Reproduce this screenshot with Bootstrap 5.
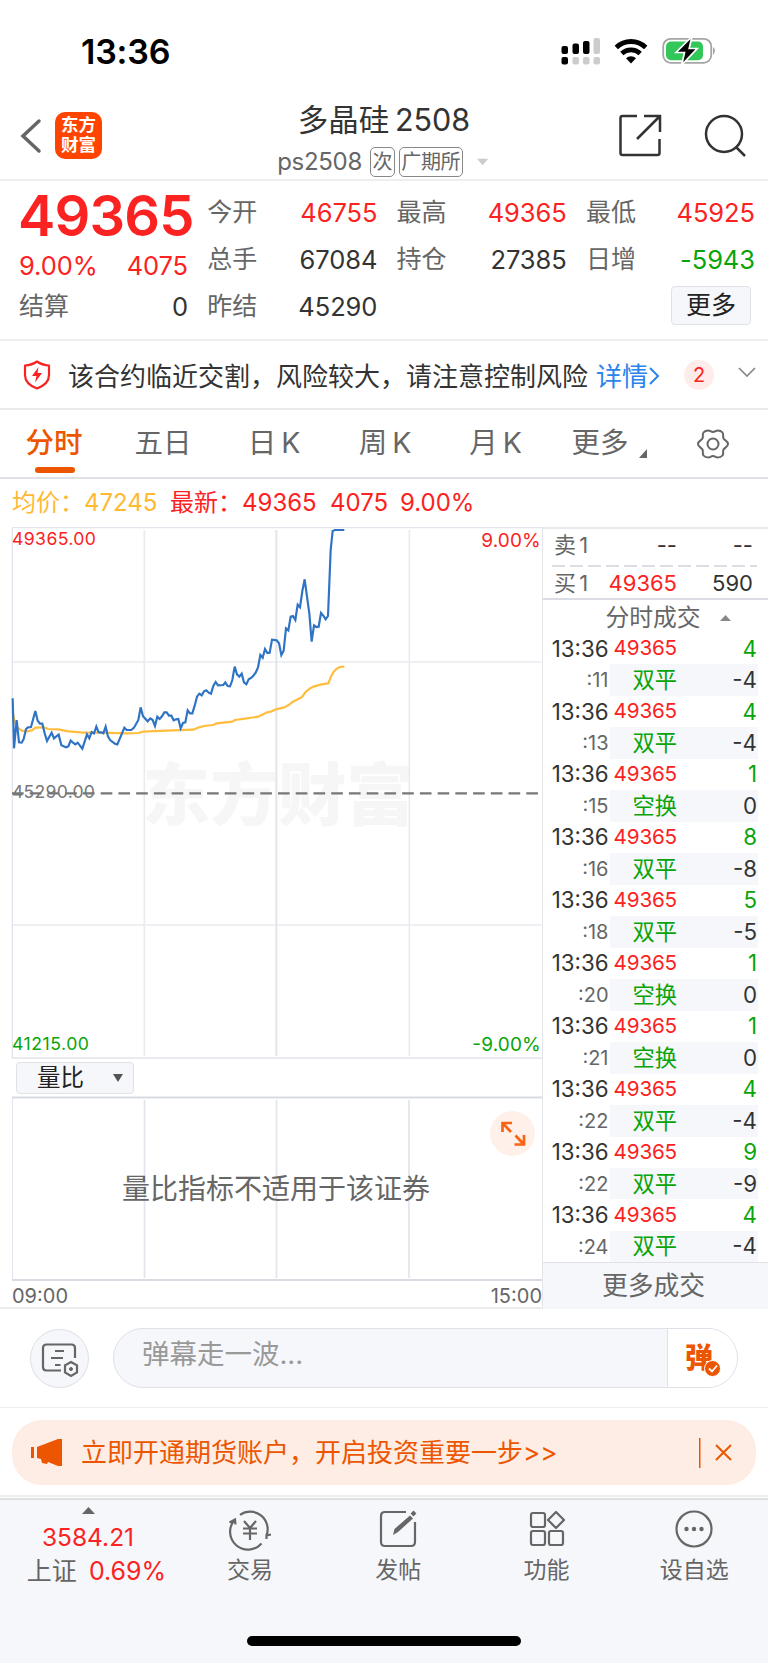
<!DOCTYPE html>
<html lang="zh-CN">
<head>
<meta charset="utf-8">
<meta name="viewport" content="width=device-width, initial-scale=1">
<title>多晶硅 2508</title>
<link href="https://cdn.jsdelivr.net/npm/bootstrap@5.3.0/dist/css/bootstrap.min.css" rel="stylesheet">
<style>
body{font-family:Inter,"Noto Sans CJK SC",sans-serif;color:#333;width:768px;line-height:1;background:#fff;overflow-x:hidden}
svg{display:block;flex:none;overflow:visible}
.t{white-space:nowrap;line-height:1}
.up{color:#fb2222}.down{color:#09a409}.mut{color:#666}.org{color:#ec5600}
.status{height:90px;padding:13px 52px 0 81px}
.clock{font-size:34px;font-weight:600;color:#000;letter-spacing:-.2px}
.head{height:91px;border-bottom:2px solid #eee;padding:2px 21px 0 21px}
.logo{width:47px;height:47px;border-radius:10px;background:#ff4400;color:#fff;font-weight:700;font-size:17.5px;line-height:20px;margin-left:14px;padding-top:3px}
.titlebox{gap:11px;padding-top:11px}
.title{font-size:30.5px;word-spacing:-3px}
.sub{font-size:24px;color:#666;letter-spacing:-.3px}
.tagbox{border:1.5px solid #888;border-radius:5px;height:30px;font-size:20px;padding:0 1.5px}
.quote{height:160px;padding:8px 13px 0 19px;border-bottom:2px solid #eee;display:grid;grid-template-columns:169px 170px 170px 169px;column-gap:19.3px;grid-template-rows:repeat(3,47px);font-size:25px}
.quote .n{font-size:25.5px;letter-spacing:-.1px}
.lastpx{grid-row:1/3}
.big{font-size:56px;font-weight:600;letter-spacing:-.8px;height:53px;margin-left:-1px}
.btn-more{width:80px;height:39px;background:#f6f7fa;border:1.5px solid #dfe1e6;border-radius:4px;font-size:25px;color:#222;margin:0 4px 3px 0}
.alertbar{height:69px;border-bottom:2px solid #e9e9ec;padding:0 12px 0 23px;font-size:26px}
.alertbar .dn{padding-top:4px}
.cnt{width:30px;height:30px;background:#feeceb;font-size:20px;margin-left:23px}
.tabs{height:69px;border-bottom:2px solid #dfe0e8;font-size:28.5px;color:#666;display:grid;grid-template-columns:108px 110px 112px 110px 111px 116px 91px}
.tabs>div{position:relative}
.ks{word-spacing:-3px}
.tabs .on::after{content:"";position:absolute;left:35px;top:57px;width:40px;height:6px;border-radius:3px;background:#ec5600}
.info{height:48px;font-size:24px;padding-left:12px}
.main{height:782px;border-bottom:2px solid #ebebee}
.left{width:530px;margin-left:12px}
.chart{height:532px}
.wm{font-size:68px;font-weight:900;fill:#f6f6f6}
.sel{width:118px;height:32px;background:#f6f7fa;border:1.5px solid #dfe1e6;border-radius:4px;font-size:23.5px;color:#222;margin:3px 0 0 4px;padding:0 10px 0 20px}
.vol{height:184px;margin-top:2px}
.note{left:0;top:0;width:100%;height:100%;font-size:28px;padding:1px 2px 0 0}
.exp{right:7px;top:15px}
.axis{height:28px;font-size:20px;padding-top:4px}
.right{width:226px;border-left:1px solid #e2e4e9}
.book{height:73px;border-bottom:2px solid #dcdde4;font-size:22px;border-top:2px solid #e8e9ec}
.book>div{height:34px;padding:0 15px 3px 11px}
.dash{height:2px!important;padding:0!important;margin:2px 11px 0 9px;background:repeating-linear-gradient(90deg,#dcdee3 0 13px,transparent 13px 18px)}
.b1{width:45px}.b2{width:78px;text-align:right}.b3{flex:1;text-align:right}
.dealhd{height:33px;font-size:23.8px;padding:2px 0 0 25px}
.deal{height:31.48px;padding-left:7px;font-size:22.3px}
.deal .tm{width:60px;text-align:right;padding-right:1.5px}
.deal .box{height:100%;width:148px;padding-right:1px}
.deal .p{width:67px;text-align:right}
.deal .px{font-size:20.7px;letter-spacing:-.2px}
.alt .tm{font-size:20px}
.alt .box{background:#f6f7fa}
.morebar{height:47px;background:#f6f7fa;border-top:1.5px solid #dfe1e6;font-size:25.8px;color:#666;padding-right:4px}
.comment{height:99px;border-bottom:1.5px solid #eeeef1;padding:0 30px}
.round{width:59px;height:59px;border:1.5px solid #dfe0e8;border-radius:50%;background:#f6f7fa}
.pill{height:60px;width:626px;margin-left:24px;border:1.5px solid #dfe0e8;border-radius:30px;background:#f6f7fa;font-size:27.5px;color:#999}
.dan{width:70px;background:#fff;border-left:1.5px solid #dfe0e8;color:#ec5600;font-weight:900;font-size:28px;position:relative}
.promo{height:65px;margin:12px 12px 10px;border-radius:30px;background:#feede5;font-size:26px;padding:0 25px 0 19px}
.foot{height:165px;background:#f6f7fa;border-top:2px solid #dfe0e4;display:grid;grid-template-columns:176px 148px 148.5px 148px 147.5px;font-size:23px;color:#666;position:relative}
.foot .it{padding-top:10px;gap:11px}
.home{position:absolute;left:247px;top:136px;width:274px;height:10px;border-radius:5px;background:#000}
</style>
</head>
<body>
<div class="status d-flex align-items-center justify-content-between">
  <span class="t clock">13:36</span>
  <svg width="156" height="30" viewBox="560 37 156 30">
    <g fill="#000"><rect x="561.5" y="46" width="6.5" height="8" rx="2"/><rect x="572.5" y="43.500" width="6.500" height="10.500" rx="2"/><rect x="583" y="41" width="6.500" height="13" rx="2"/><rect x="561.500" y="57" width="6.500" height="7.500" rx="2"/></g>
    <g fill="#ccc"><rect x="593.500" y="38" width="6.500" height="16" rx="2"/><rect x="572.500" y="57" width="6.500" height="7.500" rx="2"/><rect x="583" y="57" width="6.500" height="7.500" rx="2"/><rect x="593.500" y="57" width="6.500" height="7.500" rx="2"/></g>
    <g fill="none" stroke="#000" stroke-width="4.800"><path d="M616.300 47.500a21 21 0 0 1 29.400 0"/><path d="M621.800 53.500a13.400 13.400 0 0 1 18.400 0"/></g><path d="M631 63.500l-5-5.300a7.300 7.300 0 0 1 10 0z"/>
    <rect x="663.200" y="38.800" width="48" height="24" rx="7.500" fill="none" stroke="#a5a5a5" stroke-width="1.800"/><path d="M713 47q4 3.600 0 8z" fill="#a5a5a5"/>
    <rect x="666" y="41.500" width="37" height="18.800" rx="5" fill="#33c759"/>
    <path d="M692 36.500L676 52.500h8.500l-2.800 12.500 15.500-16.500h-8z" fill="#000" stroke="#fff" stroke-width="1.700"/>
  </svg>
</div>
<div class="head d-flex align-items-center justify-content-between">
  <div class="d-flex align-items-center" style="width:240px">
    <svg width="20" height="34" viewBox="0 0 20 34"><path d="M18 2L2 17l16 15" fill="none" stroke="#666" stroke-width="3.500" stroke-linecap="round"/></svg>
    <div class="logo text-center"><div>东方</div><div>财富</div></div>
  </div>
  <div class="titlebox d-flex flex-column align-items-center flex-fill">
    <div class="t title">多晶硅 2508</div>
    <div class="d-flex align-items-center sub">
      <span class="t">ps2508</span>
      <span class="t tagbox d-flex align-items-center ms-2">次</span>
      <span class="t tagbox d-flex align-items-center ms-1">广期所</span>
      <svg class="ms-2 ps-1" width="20" height="8" viewBox="-4 0 20 8"><path d="M-1.500 0h14l-7 8z" fill="#ccc"/></svg>
    </div>
  </div>
  <div class="d-flex justify-content-end" style="width:240px;gap:42px">
    <svg width="43" height="43" viewBox="0 0 43 43" fill="none" stroke="#333" stroke-width="2.500"><path d="M18 2H3.500q-2 0-2 2v35q0 2 2 2h35q2 0 2-2V25M25 2h16v16M41 2L18 25"/></svg>
    <svg width="43" height="43" viewBox="0 0 43 43" fill="none" stroke="#333" stroke-width="2.500"><circle cx="20" cy="20" r="18"/><path d="M32 33l9 9"/></svg>
  </div>
</div>

<div class="quote">
  <div class="lastpx d-flex flex-column">
    <div class="t up big d-flex align-items-center">49365</div>
    <div class="d-flex justify-content-between align-items-center up n" style="height:49px;padding-top:7px"><span class="t">9.00%</span><span class="t">4075</span></div>
  </div>
  <div class="d-flex justify-content-between align-items-center"><span class="t mut">今开</span><span class="t n up">46755</span></div>
  <div class="d-flex justify-content-between align-items-center"><span class="t mut">最高</span><span class="t n up">49365</span></div>
  <div class="d-flex justify-content-between align-items-center"><span class="t mut">最低</span><span class="t n up">45925</span></div>
  <div class="d-flex justify-content-between align-items-center"><span class="t mut">总手</span><span class="t n">67084</span></div>
  <div class="d-flex justify-content-between align-items-center"><span class="t mut">持仓</span><span class="t n">27385</span></div>
  <div class="d-flex justify-content-between align-items-center"><span class="t mut">日增</span><span class="t n down">-5943</span></div>
  <div class="d-flex justify-content-between align-items-center"><span class="t mut">结算</span><span class="t n">0</span></div>
  <div class="d-flex justify-content-between align-items-center"><span class="t mut">昨结</span><span class="t n">45290</span></div>
  <div></div>
  <div class="d-flex justify-content-end align-items-center"><span class="t btn-more d-flex align-items-center justify-content-center">更多</span></div>
</div>

<div class="alertbar d-flex align-items-center">
  <svg width="28" height="30" viewBox="0 0 28 30"><path d="M14 1.500Q19 5 26 5.500V15q0 9-12 13.500Q2 24 2 15V5.500Q9 5 14 1.500z" fill="none" stroke="#fb2222" stroke-width="2.200" stroke-linejoin="round"/><path d="M15.500 7L9 16h4.500l-1.500 6.500 7-9.500h-4.500z" fill="#fb2222"/></svg>
  <span class="t dn" style="margin-left:17px">该合约临近交割，风险较大，请注意控制风险</span>
  <span class="t dn" style="margin-left:8px;color:#2b83ec">详情</span>
  <svg width="13" height="18" viewBox="0 -2 13 18"><path d="M2 0l8 8-8 8" fill="none" stroke="#2b83ec" stroke-width="2"/></svg>
  <span class="cnt t up rounded-circle d-flex align-items-center justify-content-center">2</span>
  <svg class="ms-auto" width="18" height="11" viewBox="0 2 18 11"><path d="M1 1l8 8 8-8" fill="none" stroke="#888" stroke-width="1.700"/></svg>
</div>

<div class="tabs">
  <div class="on org d-flex align-items-center justify-content-center fw-medium t">分时</div>
  <div class="d-flex align-items-center justify-content-center t">五日</div>
  <div class="d-flex align-items-center justify-content-center t ks">日 K</div>
  <div class="d-flex align-items-center justify-content-center t ks">周 K</div>
  <div class="d-flex align-items-center justify-content-center t ks">月 K</div>
  <div class="d-flex align-items-center justify-content-center t" style="gap:10px">更多<svg width="8" height="9" viewBox="0 0 8 9" style="margin-top:20px"><path d="M8 0v9H0z" fill="#666"/></svg></div>
  <div class="d-flex align-items-center justify-content-center"><svg width="34" height="34" viewBox="-17 -17 34 34" fill="none" stroke="#666" stroke-width="2"><circle r="5.500"/><path stroke-linejoin="round" d="M-15 0C-15-3-11.500-3.500-10.500-5.500S-11-9.500-9.500-11.500-6-13.500-4.500-13.500-2-12 0-12 3-13.500 4.500-13.500 8-13.500 9.500-11.500 9.500-7.500 10.500-5.500 15-3 15 0 11.500 3.500 10.500 5.500 11 9.500 9.500 11.500 6 13.500 4.500 13.500 2 12 0 12-3 13.500-4.500 13.500-8 13.500-9.500 11.500-9.500 7.500-10.500 5.500-15 3-15 0z"/></svg></div>
</div>

<div class="info d-flex align-items-center">
  <span class="t" style="color:#ffb933;width:158px">均价：47245</span>
  <span class="t up" style="width:160px">最新：49365</span>
  <span class="t up" style="width:70px">4075</span>
  <span class="t up">9.00%</span>
</div>

<div class="main d-flex">
  <div class="left">
    <svg class="chart" width="530" height="532" viewBox="36 21 1590 1596">
      <text class="wm" transform="translate(427 900) scale(3)" x="0" y="0">东方财富</text>
      <g fill="none" stroke="#e3e5ec" stroke-width="5"><path d="M433 30V1608M1228 30V1608M36 426H1624M36 1215H1624" stroke="#e9ebf1"/><path d="M829 30V1608" stroke-width="6"/><path d="M36 23H1626M37 23V1614M36 1614H1626" stroke-width="4"/></g>
      <path d="M36 820H1622" stroke="#777" stroke-width="6.500" stroke-dasharray="35 18.200"/>
      <polyline fill="none" stroke="#ffbd3e" stroke-width="6.500" stroke-linejoin="round" points="38,575 44,605 52,622 65,632 80,634 96,631 106,623 130,622 145,627 175,628 205,634 250,638 300,638 380,640 415,639 430,635 500,632 580,629 597,622 612,618 640,615 650,610 697,605 705,600 735,596 774,590 802,577 815,574 828,568 853,562 866,555 876,547 905,532 917,516 930,505 940,500 965,493 985,490 992,472 1000,457 1010,446 1020,441 1033,440"/>
      <polyline fill="none" stroke="#2f74c4" stroke-width="6.500" points="38,535 42,685 50,600 57,667 65,668 71,657 78,627 84,622 93,621 106,573 113,602 120,611 127,611 134,640 141,663 148,650 155,638 162,655 169,649 176,644 184,676 198,682 205,679 212,662 219,668 226,673 233,668 247,686 261,643 268,655 275,636 282,640 289,620 296,637 303,637 310,640 317,620 324,650 331,661 345,671 352,673 366,640 373,623 380,630 394,630 402,623 415,600 422,562 429,589 443,604 451,595 458,600 465,618 472,590 479,597 486,589 493,577 500,577 507,587 514,587 521,601 528,598 535,597 542,625 549,609 556,607 563,571 570,580 577,580 584,557 591,530 598,521 605,526 612,514 619,511 626,518 633,521 640,498 647,486 654,496 670,495 676,487 683,498 690,499 697,480 704,440 711,463 718,470 725,461 732,487 739,493 746,478 753,474 760,467 767,458 774,442 781,405 788,413 795,387 802,399 809,398 816,359 830,361 837,370 844,405 851,392 858,325 865,331 872,290 879,288 886,300 893,254 900,262 907,213 914,178 921,230 928,280 935,365 942,316 949,321 956,320 963,279 970,287 977,298 984,288 988,190 992,90 998,33 1005,30 1033,30"/>
      <g font-size="53"><text x="36" y="76" fill="#fb2222" textLength="252">49365.00</text><text x="36" y="833" fill="#777" textLength="249">45290.00</text><text x="36" y="1589" fill="#09a409" textLength="231">41215.00</text><text x="1622" y="81" text-anchor="end" fill="#fb2222" font-size="57" textLength="178">9.00%</text><text x="1622" y="1593" text-anchor="end" fill="#09a409" font-size="57" textLength="205">-9.00%</text></g>
    </svg>
    <div class="sel d-flex align-items-center justify-content-between"><span class="t">量比</span><svg width="10" height="8" viewBox="0 0 10 8"><path d="M0 0h10L5 8z" fill="#555"/></svg></div>
    <div class="vol position-relative">
      <svg width="530" height="185" viewBox="0 0 530 185" fill="none" stroke="#e3e5ec"><path d="M132.500 4v178M264.500 4v178M397 4v178" stroke-width="1.700"/><path d="M.5 1v183"/><path d="M0 1.500h530M0 184h530" stroke="#d8dbe1" stroke-width="2"/></svg>
      <div class="note position-absolute t mut d-flex align-items-center justify-content-center">量比指标不适用于该证券</div>
      <svg class="exp position-absolute" width="45" height="45" viewBox="0 0 45 45"><circle cx="22.500" cy="22.500" r="22.500" fill="#fff1ea"/><path d="M12.500 21v-9h9.500M13 12.500l8 8.500M34 24v9.500H24.500M33.500 33l-8-8.500" fill="none" stroke="#fa6315" stroke-width="2.700"/></svg>
    </div>
    <div class="axis d-flex justify-content-between align-items-center mut"><span class="t">09:00</span><span class="t">15:00</span></div>
  </div>
  <div class="right">
    <div class="book">
      <div class="d-flex align-items-center"><span class="t mut b1 ks">卖 1</span><span class="t b2">--</span><span class="t b3">--</span></div>
      <div class="dash"></div>
      <div class="d-flex align-items-center"><span class="t mut b1 ks">买 1</span><span class="t b2 up">49365</span><span class="t b3">590</span></div>
    </div>
    <div class="dealhd d-flex align-items-center justify-content-center mut" style="gap:19px"><span class="t">分时成交</span><svg width="11" height="6" viewBox="0 0 11 6"><path d="M0 6L5.500 0 11 6z" fill="#888"/></svg></div>
    <div id="deals" style="height:629px"></div>
    <div class="morebar d-flex align-items-center justify-content-center t">更多成交</div>
  </div>
</div>

<div class="comment d-flex align-items-center">
  <div class="round d-flex align-items-center justify-content-center"><svg width="59" height="59" viewBox="0 0 59 59" fill="none" stroke="#666" stroke-width="2.200" style="margin:-2px"><path d="M31 41.500H16.500q-3.500 0-3.500-3.500V19q0-3.500 3.500-3.500h25q3.500 0 3.500 3.500v10M25 22h9M21 29h12M25 36h5.500"/><path d="M41 33l6 3.400v7L41 47l-6-3.600v-7z"/><circle cx="41" cy="40" r="1.500" fill="#666" stroke-width="1"/></svg></div>
  <div class="pill d-flex overflow-hidden"><span class="t flex-fill d-flex align-items-center" style="padding:0 0 6px 28px">弹幕走一波...</span>
    <div class="dan t d-flex align-items-center" style="padding-left:17px">弹<svg class="position-absolute" style="left:36px;top:31px" width="17" height="17" viewBox="0 0 17 17"><circle cx="8.500" cy="8.500" r="8" fill="#ec5600" stroke="#fff"/><path d="M5 8.500l3 3 5-6" fill="none" stroke="#fff" stroke-width="1.800"/></svg></div>
  </div>
</div>

<div class="promo d-flex align-items-center org">
  <svg width="32" height="27" viewBox="0 0 32 27" fill="#ec5600"><path d="M0 8h3v11H0zM6 8L27 0h4v27h-4l-10-4-1 2-5-1-1-4-4-1z"/></svg>
  <span class="t" style="margin-left:18px">立即开通期货账户，开启投资重要一步&gt;&gt;</span>
  <svg class="ms-auto" width="2" height="30"><rect width="1.500" height="30" fill="#ec5600"/></svg>
  <svg style="margin:0 -1px 0 14px" width="17" height="17" viewBox="0 0 17 17"><path d="M1 1l15 15M16 1L1 16" stroke="#ec5600" stroke-width="2"/></svg>
</div>
<div style="height:2px;background:#eee;margin-bottom:1px"></div>

<div class="foot">
  <div class="d-flex flex-column align-items-center" style="padding-top:7px">
    <svg width="13" height="7" viewBox="0 0 13 7"><path d="M0 7l6.500-7L13 7z" fill="#666"/></svg>
    <span class="t up" style="font-size:24.500px;margin-top:11px">3584.21</span>
    <div class="d-flex t" style="font-size:25px;margin-top:9px;margin-left:17px;gap:12px"><span>上证</span><span class="up">0.69%</span></div>
  </div>
  <div class="it d-flex flex-column align-items-center"><svg width="42" height="38" viewBox="0 0 42 38" fill="none" stroke="#666" stroke-width="2.200"><path d="M11 4.800A17.600 17.600 0 0 1 37.500 25.500M37.500 29V25.500l4.500-1M5.500 10A17.600 17.600 0 0 0 32.500 33.500M.5 12.500l5.500-3 .5 5"/><path d="M15 11l6 7 6-7M21 18v12M14 18.500h14M14 23.500h14"/></svg><span class="t">交易</span></div>
  <div class="it d-flex flex-column align-items-center"><svg width="38" height="38" viewBox="0 0 38 38" fill="none" stroke="#666" stroke-width="2.200"><path d="M27 2H6Q2 2 2 6v26q0 4 4 4h26q4 0 4-4V12"/><path d="M14 25l1.500-6L31 5.500l3 3L19 22z" fill="#666" stroke="none"/><path d="M33 5l3-3" stroke-width="4"/></svg><span class="t">发帖</span></div>
  <div class="it d-flex flex-column align-items-center"><svg width="36" height="38" viewBox="0 0 36 38" fill="none" stroke="#666" stroke-width="2.200"><rect x="2" y="3" width="14" height="14" rx="2"/><rect x="2" y="21" width="14" height="14" rx="2"/><rect x="20" y="21" width="14" height="14" rx="2"/><path stroke-linejoin="round" d="M27 2l8 8-8 8-8-8z"/></svg><span class="t">功能</span></div>
  <div class="it d-flex flex-column align-items-center"><svg width="38" height="38" viewBox="0 0 38 38"><circle cx="19" cy="19" r="17.500" fill="none" stroke="#666" stroke-width="2.200"/><g fill="#666"><circle cx="11.500" cy="19" r="2.200"/><circle cx="19" cy="19" r="2.200"/><circle cx="26.500" cy="19" r="2.200"/></g></svg><span class="t">设自选</span></div>
  <div class="home"></div>
</div>

<script src="https://cdn.jsdelivr.net/npm/bootstrap@5.3.0/dist/js/bootstrap.bundle.min.js"></script>
<script>
const deals=[[11,4,'双平',-4],[13,4,'双平',-4],[15,1,'空换',0],[16,8,'双平',-8],[18,5,'双平',-5],[20,1,'空换',0],[21,1,'空换',0],[22,4,'双平',-4],[22,9,'双平',-9],[24,4,'双平',-4]];
document.getElementById('deals').innerHTML=deals.map(([s,v,k,d])=>`
<div class="deal d-flex align-items-center"><span class="t tm">13:36</span><div class="box d-flex align-items-center justify-content-between"><span class="t p px up">49365</span><span class="t down">${v}</span></div></div>
<div class="deal alt d-flex align-items-center"><span class="t tm mut">:${s}</span><div class="box d-flex align-items-center justify-content-between"><span class="t p down">${k}</span><span class="t">${d}</span></div></div>`).join('');
</script>
</body>
</html>
